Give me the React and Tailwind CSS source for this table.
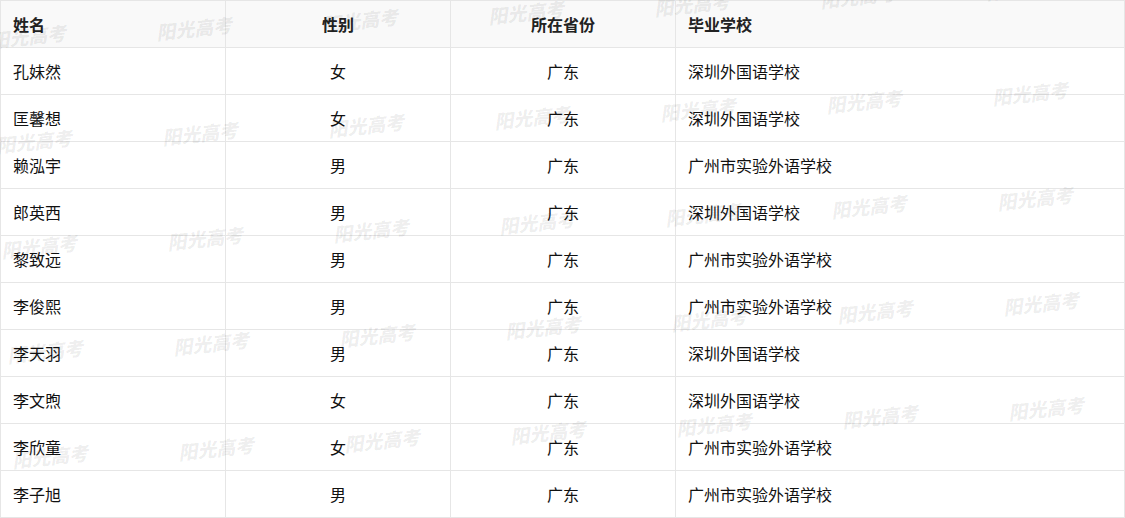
const ROWS = [
  ['孔妹然', '女', '广东', '深圳外国语学校'],
  ['匡馨想', '女', '广东', '深圳外国语学校'],
  ['赖泓宇', '男', '广东', '广州市实验外语学校'],
  ['郎英西', '男', '广东', '深圳外国语学校'],
  ['黎致远', '男', '广东', '广州市实验外语学校'],
  ['李俊熙', '男', '广东', '广州市实验外语学校'],
  ['李天羽', '男', '广东', '深圳外国语学校'],
  ['李文煦', '女', '广东', '深圳外国语学校'],
  ['李欣童', '女', '广东', '广州市实验外语学校'],
  ['李子旭', '男', '广东', '广州市实验外语学校'],
]

// watermark grid: each row drifts right, each column drifts up
const MARKS = []
for (let r = 0; r < 5; r++) {
  for (let i = 0; i < 7; i++) {
    MARKS.push({ left: -10 + 5.5 * r + 166 * i, top: 26 + 105 * r - 8 * i })
  }
}

const font = { fontFamily: '"Noto Sans CJK SC", "Noto Sans", sans-serif' }

export default function App() {
  return (
    <div className="relative w-[1125px] h-[518px] bg-white overflow-hidden" style={font}>
      {/* Table */}
      <div className="grid grid-cols-[225px_225px_225px_449px] border-l border-t border-[#e6e6e6] text-[16px] text-[#111]">
        <div className="h-[47px] flex items-center pl-3 bg-[#f9f9f9] border-r border-b border-[#e6e6e6] font-bold text-[#222]">姓名</div>
        <div className="h-[47px] flex items-center justify-center bg-[#f9f9f9] border-r border-b border-[#e6e6e6] font-bold text-[#222]">性别</div>
        <div className="h-[47px] flex items-center justify-center bg-[#f9f9f9] border-r border-b border-[#e6e6e6] font-bold text-[#222]">所在省份</div>
        <div className="h-[47px] flex items-center pl-3 bg-[#f9f9f9] border-r border-b border-[#e6e6e6] font-bold text-[#222]">毕业学校</div>
        {ROWS.map((row) => (
          <div key={row[0]} className="contents">
            <div className="h-[47px] flex items-center pl-3 border-r border-b border-[#e6e6e6]">{row[0]}</div>
            <div className="h-[47px] flex items-center justify-center border-r border-b border-[#e6e6e6]">{row[1]}</div>
            <div className="h-[47px] flex items-center justify-center border-r border-b border-[#e6e6e6]">{row[2]}</div>
            <div className="h-[47px] flex items-center pl-3 border-r border-b border-[#e6e6e6]">{row[3]}</div>
          </div>
        ))}
      </div>

      {/* Watermarks */}
      <div className="absolute inset-0 pointer-events-none">
        {MARKS.map((m, k) => (
          <span
            key={k}
            className="absolute whitespace-nowrap text-[19px] leading-[20px] font-black italic text-black/[0.07] -rotate-6"
            style={{ left: m.left, top: m.top }}
          >
            阳光高考
          </span>
        ))}
      </div>
    </div>
  )
}
